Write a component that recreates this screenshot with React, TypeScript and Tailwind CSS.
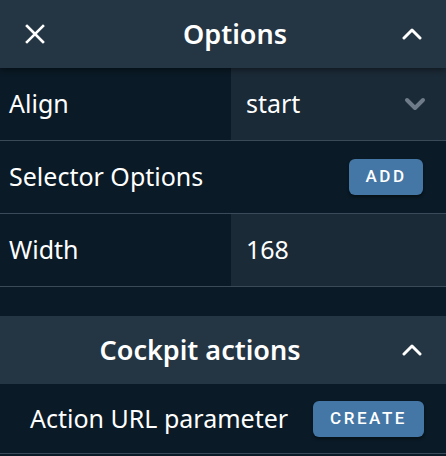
export default function App() {
  const labelFont = { fontFamily: '"Noto Sans", "Open Sans", sans-serif' };
  return (
    <div className="w-[446px] h-[456px] overflow-hidden bg-[#0a1a26] text-white" style={labelFont}>
      {/* Options header */}
      <div className="relative z-10 flex h-[68px] items-center bg-[#243543] shadow-[0_2px_6px_rgba(0,0,0,0.45)]">
        <div className="flex w-[70px] justify-center">
          <svg width="20" height="20" viewBox="0 0 20 20" fill="none" stroke="white" strokeWidth="2.6" strokeLinecap="square">
            <path d="M2 2 L18 18 M18 2 L2 18" />
          </svg>
        </div>
        <div className="flex-1 text-center text-[27px] font-semibold">Options</div>
        <div className="flex w-[46px] justify-start pl-[2px]">
          <svg width="20" height="12" viewBox="0 0 20 12" fill="none" stroke="white" strokeWidth="3" strokeLinecap="round" strokeLinejoin="round">
            <path d="M2 10 L10 2 L18 10" />
          </svg>
        </div>
      </div>

      {/* Align */}
      <div className="flex h-[73px] border-b border-[#3a4a58]">
        <div className="flex w-[231px] items-center pl-[9px] text-[25px]">Align</div>
        <div className="flex flex-1 items-center justify-between bg-[#1b2a37] pl-[15px] pr-[20px] text-[25px]">
          <span>start</span>
          <svg width="22" height="14" viewBox="0 0 22 14" fill="none" stroke="#6f7b88" strokeWidth="4" strokeLinecap="round" strokeLinejoin="round">
            <path d="M3 3 L11 11 L19 3" />
          </svg>
        </div>
      </div>

      {/* Selector Options */}
      <div className="flex h-[73px] items-center justify-between border-b border-[#3a4a58] pl-[9px] pr-[23px]">
        <span className="text-[25px]">Selector Options</span>
        <button
          className="h-[36px] w-[74px] rounded-[6px] bg-[#4477a5] text-[17px] font-medium tracking-[0.15em] shadow-[0_2px_3px_rgba(0,0,0,0.4)]"
          style={{ fontFamily: 'Roboto, sans-serif' }}
        >
          ADD
        </button>
      </div>

      {/* Width */}
      <div className="flex h-[73px] border-b border-[#3a4a58]">
        <div className="flex w-[231px] items-center pl-[9px] text-[25px]">Width</div>
        <div className="flex flex-1 items-center bg-[#1b2a37] pl-[15px] text-[25px]">168</div>
      </div>

      <div className="h-[29px]" />

      {/* Cockpit actions header */}
      <div className="flex h-[68px] items-center bg-[#243543]">
        <div className="flex-1 text-center text-[27px] font-semibold">Cockpit actions</div>
        <div className="flex w-[46px] justify-start pl-[2px]">
          <svg width="20" height="12" viewBox="0 0 20 12" fill="none" stroke="white" strokeWidth="3" strokeLinecap="round" strokeLinejoin="round">
            <path d="M2 10 L10 2 L18 10" />
          </svg>
        </div>
      </div>

      {/* Action URL parameter */}
      <div className="flex h-[70px] items-center justify-between border-b border-[#3a4a58] pl-[30px] pr-[22px]">
        <span className="text-[25px]">Action URL parameter</span>
        <button
          className="h-[36px] w-[111px] rounded-[6px] bg-[#4477a5] text-[17px] font-medium tracking-[0.15em] shadow-[0_2px_3px_rgba(0,0,0,0.4)]"
          style={{ fontFamily: 'Roboto, sans-serif' }}
        >
          CREATE
        </button>
      </div>
    </div>
  );
}
